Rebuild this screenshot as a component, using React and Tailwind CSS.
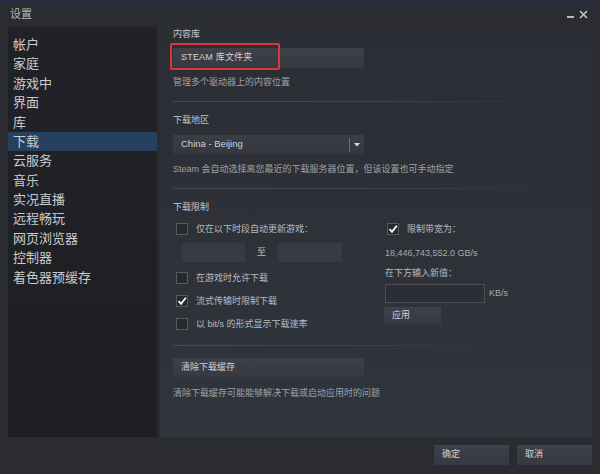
import React from 'react';

const FONT = { fontFamily: '"Liberation Sans", "Noto Sans CJK SC", sans-serif' };

const navItems = ['帐户', '家庭', '游戏中', '界面', '库', '下载', '云服务', '音乐', '实况直播', '远程畅玩', '网页浏览器', '控制器', '着色器预缓存'];

const Checkbox = ({ checked }) => (
    <div className="w-[12px] h-[12px] border border-[#56595f] bg-[#26292e] flex items-center justify-center">
        {checked && (
            <svg width="10" height="10" viewBox="0 0 10 10">
                <polyline points="1.5,5 4,7.8 8.8,1.8" fill="none" stroke="#ffffff" strokeWidth="1.8" />
            </svg>
        )}
    </div>
);

const CheckRow = ({ checked, label, className = '' }) => (
    <div className={`flex items-center h-[12px] ${className}`}>
        <Checkbox checked={checked} />
        <span className="ml-[8px] text-[9px] leading-[12px] text-[#b9bcc1]">{label}</span>
    </div>
);

const Button = ({ children, className = '' }) => (
    <div className={`bg-gradient-to-b from-[#3e414a] to-[#363941] text-[#d0d2d6] text-[9px] flex items-center pl-[8px] ${className}`}>
        {children}
    </div>
);

const Separator = ({ className = '' }) => (
    <div className={`h-px bg-gradient-to-r from-[#464a52] via-[#40444b] to-transparent ${className}`} />
);

const App = () => {
    return (
        <div className="w-[600px] h-[474px] bg-[#2a2c31] flex flex-col relative overflow-hidden border-t border-[#232a44]" style={FONT}>
            {/* title bar */}
            <div className="h-[26px] flex items-center justify-between px-[10px]">
                <span className="text-[11px] text-[#b4b6ba]">设置</span>
                <div className="flex items-center gap-[5px] mr-[2px]">
                    <div className="w-[7px] h-[2px] bg-[#b9bbbf] mt-[5px]" />
                    <svg width="9" height="9" viewBox="0 0 9 9">
                        <path d="M1 1 L8 8 M8 1 L1 8" stroke="#c2c4c8" strokeWidth="1.6" />
                    </svg>
                </div>
            </div>

            <div className="flex h-[410px] pl-[8px] pr-[8px]">
                {/* sidebar */}
                <div className="w-[149px] bg-gradient-to-b from-[#202227] to-[#1d1f23] pt-[8px] flex flex-col">
                    {navItems.map((item) => (
                        <div
                            key={item}
                            className={`h-[19.4px] flex items-center pl-[5px] text-[13px] text-[#c9cbcf] ${item === '下载' ? 'bg-[#26405f]' : ''}`}
                        >
                            {item}
                        </div>
                    ))}
                </div>

                {/* content */}
                <div className="flex-1 ml-[3px] bg-gradient-to-b from-[#2b2e34] to-[#30343c] pl-[13px] flex flex-col">
                    <div className="mt-[1px] h-[12px] text-[9px] leading-[12px] text-[#c3c5c9]">内容库</div>
                    <div className="relative mt-[8px] w-[191px]">
                        <Button className="h-[20px] w-[191px] tracking-[0.2px]">STEAM 库文件夹</Button>
                        <div className="absolute left-[-3px] top-[-5px] w-[110px] h-[27px] border-2 border-[#e0353c] rounded-[2px]" />
                    </div>
                    <div className="mt-[8px] h-[12px] text-[9px] leading-[12px] text-[#9ea1a7]">管理多个驱动器上的内容位置</div>
                    <Separator className="mt-[13px] w-[388px]" />

                    <div className="mt-[12px] h-[12px] text-[9px] leading-[12px] text-[#c3c5c9]">下载地区</div>
                    <div className="mt-[9px] w-[191px] h-[19px] bg-gradient-to-b from-[#3b3e46] to-[#34373e] flex items-center">
                        <span className="flex-1 pl-[8px] text-[9.5px] text-[#d0d2d6]">China - Beijing</span>
                        <div className="w-px h-[14px] bg-[#6a6d73]" />
                        <svg width="14" height="8" viewBox="0 0 14 8">
                            <path d="M4 2 L10 2 L7 5.5 Z" fill="#d6d8dc" />
                        </svg>
                    </div>
                    <div className="mt-[9px] h-[12px] text-[9px] leading-[12px] text-[#9ea1a7]">Steam 会自动选择离您最近的下载服务器位置，但该设置也可手动指定</div>
                    <Separator className="mt-[13px] w-[388px]" />

                    <div className="mt-[12px] h-[12px] text-[9px] leading-[12px] text-[#c3c5c9]">下载限制</div>
                    <div className="flex h-[117px]">
                        {/* left column */}
                        <div className="w-[212px] flex flex-col pl-[3px]">
                            <CheckRow className="mt-[10px]" label="仅在以下时段自动更新游戏：" />
                            <div className="mt-[8px] flex items-center pl-[6px]">
                                <div className="w-[63px] h-[19px] bg-[#383b42]" />
                                <span className="w-[33px] text-center text-[9px] text-[#b9bcc1]">至</span>
                                <div className="w-[64px] h-[19px] bg-[#383b42]" />
                            </div>
                            <CheckRow className="mt-[10px]" label="在游戏时允许下载" />
                            <CheckRow className="mt-[11px]" checked label="流式传输时限制下载" />
                            <CheckRow className="mt-[11px]" label="以 bit/s 的形式显示下载速率" />
                        </div>
                        {/* right column */}
                        <div className="flex flex-col">
                            <div className="pl-[2px]">
                                <CheckRow className="mt-[10px]" checked label="限制带宽为：" />
                            </div>
                            <div className="mt-[12px] h-[12px] text-[9px] leading-[12px] text-[#a6a9ae]">18,446,743,552.0 GB/s</div>
                            <div className="mt-[8px] h-[12px] text-[9px] leading-[12px] text-[#b9bcc1]">在下方输入新值：</div>
                            <div className="mt-[5px] flex items-center">
                                <div className="w-[100px] h-[19px] border border-[#4c4f56] bg-[#2b2e34]" />
                                <span className="ml-[4px] text-[9px] text-[#a6a9ae]">KB/s</span>
                            </div>
                            <Button className="mt-[4px] w-[57px] h-[18px] -ml-px">应用</Button>
                        </div>
                    </div>
                    <Separator className="mt-[15px] w-[319px]" />

                    <Button className="mt-[12px] w-[191px] h-[19px]">清除下载缓存</Button>
                    <div className="mt-[10px] h-[12px] text-[9px] leading-[12px] text-[#9ea1a7]">清除下载缓存可能能够解决下载或启动应用时的问题</div>
                </div>
            </div>

            {/* footer */}
            <div className="flex justify-end gap-[8px] pr-[8px] mt-[8px]">
                <Button className="w-[75px] h-[20px]">确定</Button>
                <Button className="w-[75px] h-[20px]">取消</Button>
            </div>
        </div>
    );
};

export default App;
